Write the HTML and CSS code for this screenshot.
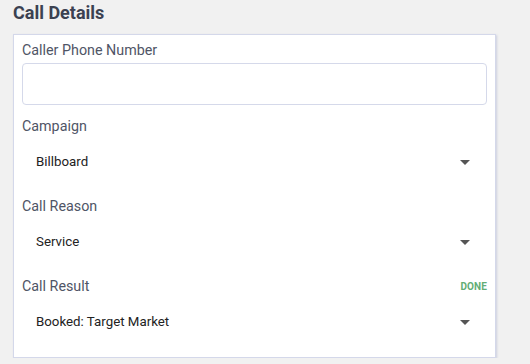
FILE: index.html
```html
<!DOCTYPE html>
<html>
<head>
<meta charset="utf-8">
<link rel="stylesheet" href="styles.css">
</head>
<body>
<div class="page">
  <h1 class="title">Call Details</h1>
  <div class="card">
    <div class="field">
      <label class="label">Caller Phone Number</label>
      <div class="input"></div>
    </div>
    <div class="field">
      <div class="label-row"><label class="label">Campaign</label></div>
      <div class="select"><span>Billboard</span><span class="arrow"></span></div>
    </div>
    <div class="field">
      <div class="label-row"><label class="label">Call Reason</label></div>
      <div class="select"><span>Service</span><span class="arrow"></span></div>
    </div>
    <div class="field">
      <div class="label-row"><label class="label">Call Result</label><span class="done">DONE</span></div>
      <div class="select"><span>Booked: Target Market</span><span class="arrow"></span></div>
    </div>
  </div>
</div>
</body>
</html>
```

FILE: styles.css
```css
html, body {
  margin: 0;
  padding: 0;
  background: #f1f1f1;
  font-family: Roboto, "Liberation Sans", sans-serif;
}
.page {
  padding: 2px 34px 0 13px;
  width: 483px;
}
.title {
  margin: 0;
  font-size: 18px;
  line-height: 22px;
  font-weight: 700;
  color: #3b4151;
  height: 32px;
}
.card {
  background: #ffffff;
  border: 1px solid #d4d8ea;
  box-shadow: 1px 1px 2px rgba(160, 168, 200, 0.45);
  padding: 5px 8px 15px 8px;
}
.label {
  display: block;
  font-size: 14.3px;
  line-height: 20px;
  color: #4f5566;
}
.input {
  margin-top: 3px;
  height: 40px;
  border: 1px solid #d5d9ea;
  border-radius: 4px;
  margin-bottom: 11px;
}
.label-row {
  display: flex;
  justify-content: space-between;
  align-items: center;
  height: 20px;
}
.done {
  font-size: 10px;
  font-weight: 700;
  color: #62ad75;
  margin-right: 0;
  letter-spacing: 0.1px;
}
.select {
  margin-top: 6px;
  height: 40px;
  display: flex;
  align-items: center;
  justify-content: space-between;
  padding: 0 17px 0 14px;
  font-size: 13.3px;
  line-height: 20px;
  color: #222222;
}
.field + .field .select {
  margin-bottom: 14px;
}
.field:last-child .select {
  margin-bottom: 0;
}
.arrow {
  width: 0;
  height: 0;
  border-left: 5px solid transparent;
  border-right: 5px solid transparent;
  border-top: 5px solid #555555;
}
```
